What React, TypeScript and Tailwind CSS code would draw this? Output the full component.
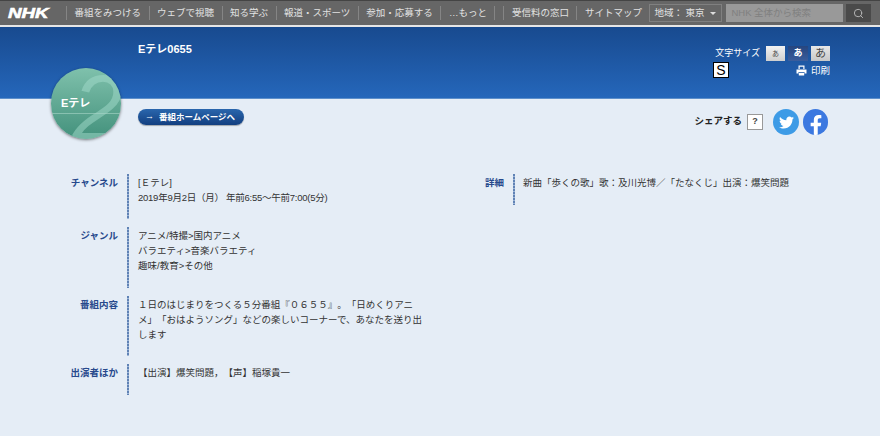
import { Search } from "lucide-react";
import { FaFacebookF, FaTwitter } from "react-icons/fa";

const navItems = ["番組をみつける", "ウェブで視聴", "知る学ぶ", "報道・スポーツ", "参加・応募する", "…もっと"];

const jp = "font-['Liberation_Sans','Noto_Sans_CJK_JP',sans-serif] [text-spacing-trim:space-all]";
const dots = "w-[2px] shrink-0 bg-[repeating-linear-gradient(to_bottom,#5f82b5_0,#5f82b5_2px,#9db5d6_2px,#9db5d6_3px)]";

function InfoRow({ label, lines, h }: { label: string; lines: string[]; h: string }) {
  return (
    <div className={`flex ${h}`}>
      <div className="w-[118px] pt-px text-right text-[9.5px] leading-[15px] font-bold text-[#27498c]">{label}</div>
      <div className={`ml-[9px] ${dots}`} />
      <div className="ml-[9px] pt-px text-[9.5px] leading-[15px] text-[#333]">
        {lines.map((l) => (
          <div key={l} className={`whitespace-nowrap ${l.startsWith("2019") ? "tracking-[-0.25px]" : ""}`}>{l}</div>
        ))}
      </div>
    </div>
  );
}

export default function App() {
  return (
    <div className={`relative h-[436px] w-[880px] overflow-hidden bg-[#e5edf6] ${jp}`}>
      <nav className="flex h-[27px] items-center border-t border-b-2 border-t-[#444] border-b-[#e6e6e6] bg-[#666] text-[9.5px] text-[#e2e2e2]">
        <span className="ml-[8px] w-[58px] shrink-0 origin-left scale-x-[1.25] text-[15px] font-bold italic text-white [-webkit-text-stroke:0.6px_white]">NHK</span>
        {navItems.map((item) => (
          <span key={item} className="shrink-0 border-l border-[#858585] px-[7.5px] leading-[14px] whitespace-nowrap">{item}</span>
        ))}
        <span className="h-[14px] shrink-0 border-l border-[#858585]" />
        <span className="ml-[8px] shrink-0 border-l border-[#858585] px-[7.5px] leading-[14px] whitespace-nowrap">受信料の窓口</span>
        <span className="shrink-0 border-l border-[#858585] px-[7.5px] leading-[14px] whitespace-nowrap">サイトマップ</span>
        <div className="flex h-[18px] w-[73px] shrink-0 items-center justify-between border border-[#808080] pr-[5px] pl-[4px] whitespace-nowrap">
          <span>地域： 東京</span>
          <span className="h-0 w-0 border-x-[3px] border-t-[3px] border-x-transparent border-t-[#ddd]" />
        </div>
        <div className="ml-[4px] flex h-[18px] w-[117px] shrink-0 items-center bg-[#999] px-[5px] whitespace-nowrap text-[#808080]">NHK 全体から検索</div>
        <div className="ml-[3px] flex h-[18px] w-[25px] shrink-0 items-center justify-center bg-[#4a4a4a]">
          <Search size={11} className="text-[#bbb]" />
        </div>
      </nav>

      <header className="flex h-[72px] justify-between border-b border-[#5d8fcb] bg-gradient-to-b from-[#184a8f] to-[#2567bb] pt-[16px]">
        <div className="ml-[138px] text-[11px] leading-[13px] font-semibold text-white">Eテレ0655</div>
        <div className="mt-[3px] mr-[50px] flex flex-col items-end">
          <div className="flex items-center text-[9px] leading-[15px] text-white">
            <span className="mr-[6px]">文字サイズ</span>
            <span className="flex h-[15px] w-[19px] items-center justify-center bg-gradient-to-b from-[#f2f2f2] to-[#cfcfcf] text-[7px] text-[#444]">あ</span>
            <span className="ml-[3px] flex h-[15px] w-[20px] items-center justify-center bg-gradient-to-b from-[#26467f] to-[#3a5d9c] text-[9px] font-bold">あ</span>
            <span className="ml-[3px] flex h-[15px] w-[19px] items-center justify-center bg-gradient-to-b from-[#e8e8e8] to-[#c8c8c8] text-[11px] text-[#444]">あ</span>
          </div>
          <div className="mt-px flex w-[117px] items-center text-[9.5px] leading-[15px] text-white">
            <span className="flex h-[16px] w-[16px] items-center justify-center border border-black bg-white text-[14px] leading-none text-black">S</span>
            <svg width="11" height="11" viewBox="0 0 11 11" className="mr-[4px] ml-auto" fill="white">
              <path d="M2.5 0.5h6v3.5h-1.2V1.7H3.7V4H2.5z" />
              <path d="M0.5 4.5h10v4h-2V7h-6v1.5h-2z" />
              <rect x="2.8" y="7.8" width="5.4" height="2.7" />
            </svg>
            <span>印刷</span>
          </div>
        </div>
      </header>

      {/* logo sits across the header edge */}
      <div className="absolute top-[68px] left-[51px] h-[71px] w-[70px] overflow-hidden rounded-full bg-gradient-to-b from-[#7fc1ac] to-[#42917c] shadow-[0_1px_3px_rgba(0,0,0,0.5)]">
        <span className="absolute -top-[6px] left-[21px] text-[92px] leading-[92px] text-[#a3dccb]/50 italic">2</span>
        <span className="absolute top-[28px] left-[10px] text-[11px] leading-[15px] font-bold text-white">Eテレ</span>
        <div className="absolute top-[45px] left-0 h-px w-full bg-[#a9d6c8]/60" />
      </div>

      <div className="flex items-start justify-between pt-[10px]">
        <div className="ml-[138px] flex h-[16px] w-[106px] items-center rounded-full bg-gradient-to-b from-[#2a66ad] to-[#123f80] pl-[7px] text-[8.5px] font-semibold whitespace-nowrap text-white shadow-[0_1px_1px_rgba(0,0,0,0.3)]">
          <span className="w-[14px] shrink-0 text-[9px]">→</span>番組ホームページへ
        </div>
        <div className="mr-[52px] flex items-center">
          <span className="mt-[-2px] text-[9.5px] font-bold text-[#222]">シェアする</span>
          <span className="mt-[-1px] ml-[5px] flex h-[16px] w-[16px] items-center justify-center border border-[#999] bg-white text-[9px] font-bold text-[#444]">?</span>
          <span className="ml-[10px] flex h-[26px] w-[26px] items-center justify-center rounded-full bg-[#3d9be6] text-white"><FaTwitter size={15} /></span>
          <span className="ml-[4px] flex h-[26px] w-[25px] items-end justify-center overflow-hidden rounded-full bg-[#3b78e0] text-white"><FaFacebookF size={20} /></span>
        </div>
      </div>

      <div className="mt-[39px] flex">
        <div className="flex w-[428px] flex-col gap-[8px]">
          <InfoRow h="h-[45px]" label="チャンネル" lines={["[Ｅテレ]", "2019年9月2日（月） 年前6:55～午前7:00(5分)"]} />
          <InfoRow h="h-[61px]" label="ジャンル" lines={["アニメ/特撮>国内アニメ", "バラエティ>音楽バラエティ", "趣味/教育>その他"]} />
          <InfoRow h="h-[60px]" label="番組内容" lines={["１日のはじまりをつくる５分番組『０６５５』。「日めくりアニ", "メ」「おはようソング」などの楽しいコーナーで、あなたを送り出", "します"]} />
          <InfoRow h="h-[31px]" label="出演者ほか" lines={["【出演】爆笑問題，【声】稲塚貴一"]} />
        </div>
        <div className="flex h-[31px]">
          <div className="w-[76px] pt-px text-right text-[9.5px] leading-[15px] font-bold text-[#27498c]">詳細</div>
          <div className={`ml-[9px] ${dots}`} />
          <div className="ml-[8px] pt-px text-[9.5px] leading-[15px] whitespace-nowrap text-[#333]">
            新曲「歩くの歌」歌：及川光博／「たなくじ」出演：爆笑問題
          </div>
        </div>
      </div>
    </div>
  );
}
